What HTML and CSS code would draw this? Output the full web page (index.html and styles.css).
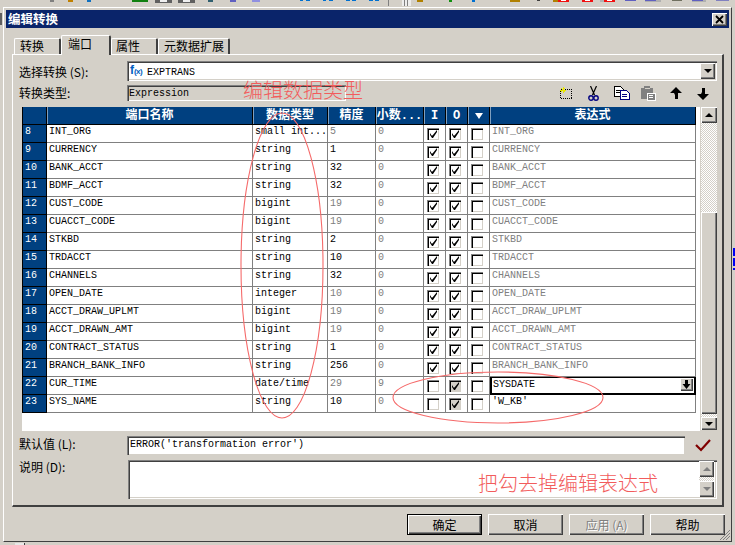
FILE: index.html
```html
<!DOCTYPE html>
<html lang="zh-CN">
<head>
<meta charset="utf-8">
<title>编辑转换</title>
<link rel="stylesheet" href="styles.css">
</head>
<body>
<svg width="0" height="0" class="defs" aria-hidden="true">
  <symbol id="ck" viewBox="0 0 12 12"><path d="M3 5 L3 7 L5 10 L6 10 L10 4 L10 2 L5.5 7.5 L4.5 7.5 L3 5Z" fill="#000"/></symbol>
</svg>
<div class="page">
  <svg class="appbar" width="735" height="7" viewBox="0 0 735 7" shape-rendering="crispEdges" aria-hidden="true">
    <rect x="50" y="0" width="4" height="2" fill="#808080"/>
    <rect x="68" y="0" width="5" height="2" fill="#c08000"/>
    <rect x="87" y="0" width="4" height="2" fill="#1070c0"/>
    <rect x="132" y="0" width="16" height="2" fill="#108010"/>
    <rect x="155" y="0" width="17" height="3" fill="#606060"/><rect x="160" y="0" width="7" height="2" fill="#f0f0f0"/>
    <rect x="178" y="0" width="17" height="3" fill="#606060"/><rect x="183" y="0" width="7" height="2" fill="#f0f0f0"/>
    <rect x="208" y="0" width="5" height="2" fill="#306070"/>
    <rect x="230" y="0" width="6" height="2" fill="#6060c0"/>
    <rect x="252" y="0" width="8" height="2" fill="#9090e0"/>
    <rect x="300" y="0" width="3" height="1" fill="#0070d0"/><rect x="306" y="0" width="4" height="1" fill="#0070d0"/>
    <rect x="323" y="0" width="3" height="1" fill="#0070d0"/><rect x="329" y="0" width="4" height="1" fill="#0070d0"/>
    <rect x="346" y="0" width="4" height="1" fill="#0070d0"/><rect x="352" y="0" width="4" height="1" fill="#0070d0"/>
    <rect x="369" y="0" width="4" height="1" fill="#0070d0"/><rect x="375" y="0" width="4" height="1" fill="#0070d0"/>
    <rect x="388" y="0" width="1" height="6" fill="#808080"/>
    <rect x="402" y="0" width="9" height="6" fill="#eeeeee"/><rect x="404" y="0" width="1" height="6" fill="#808080"/><rect x="407" y="0" width="1" height="6" fill="#808080"/>
    <rect x="417" y="0" width="6" height="2" fill="#b08000"/>
    <rect x="449" y="0" width="3" height="2" fill="#109010"/>
    <rect x="472" y="0" width="3" height="2" fill="#0070d0"/>
    <rect x="510" y="0" width="10" height="2" fill="#b08000"/>
    <rect x="537" y="0" width="3" height="1" fill="#404040"/>
    <rect x="553" y="0" width="5" height="2" fill="#b08000"/><rect x="558" y="0" width="11" height="2" fill="#f01010"/><rect x="561" y="0" width="5" height="1" fill="#fff"/>
    <rect x="582" y="0" width="11" height="2" fill="#f01010"/><rect x="585" y="0" width="5" height="1" fill="#fff"/>
    <rect x="600" y="0" width="15" height="2" fill="#b0b0b0"/><rect x="604" y="0" width="11" height="2" fill="#f01010"/><rect x="607" y="0" width="5" height="1" fill="#fff"/>
    <rect x="625" y="0" width="11" height="1" fill="#6060c0"/>
    <rect x="645" y="0" width="16" height="2" fill="#b0b0b0"/><rect x="645" y="0" width="11" height="1" fill="#6060c0"/>
    <rect x="672" y="0" width="10" height="1" fill="#707060"/>
    <rect x="692" y="0" width="14" height="2" fill="#b0b0b0"/><rect x="692" y="0" width="11" height="1" fill="#6060c0"/>
    <rect x="716" y="0" width="13" height="1" fill="#8080c0"/>
  </svg>

  <div class="dialog">
    <div class="title">
      <span class="title-text">编辑转换</span>
      <button class="close raised" type="button" aria-label="关闭">
        <svg width="9" height="9" viewBox="0 0 9 9" aria-hidden="true"><path d="M1 1 L8 8 M8 1 L1 8" stroke="#000" stroke-width="1.8" fill="none"/></svg>
      </button>
    </div>

    <div class="tabs">
      <div class="tab tab-a">转换</div>
      <div class="tab tab-active">端口</div>
      <div class="tab tab-b">属性</div>
      <div class="tab tab-c">元数据扩展</div>
    </div>

    <div class="panel">
      <div class="form-row row-select">
        <label class="label label-top">选择转换 (S):</label>
        <div class="select sunken">
          <span class="fx">f<small class="fx-x">(x)</small></span><span class="mono select-text">EXPTRANS</span>
          <span class="drop raised"><i class="arrow-down"></i></span>
        </div>
      </div>

      <div class="form-row row-type">
        <label class="label">转换类型:</label>
        <div class="type-field sunken mono">Expression</div>
        <div class="tools">
          <svg class="tool t-new" width="14" height="13" viewBox="0 0 14 13" shape-rendering="crispEdges" aria-hidden="true">
            <rect x="1.5" y="2.5" width="11" height="9" fill="none" stroke="#000" stroke-dasharray="1 1"/>
            <path d="M4 0 V6 M1 3 H7 M2 1 L6 5 M6 1 L2 5" stroke="#e8e800" fill="none"/>
          </svg>
          <svg class="tool t-cut" width="11" height="15" viewBox="0 0 11 15" aria-hidden="true">
            <path d="M2.5 0 L6.5 9 M8.5 0 L4.5 9" stroke="#000" stroke-width="1.2" fill="none"/>
            <circle cx="3" cy="12" r="2.2" fill="none" stroke="#000080" stroke-width="1.4"/>
            <circle cx="8" cy="12" r="2.2" fill="none" stroke="#000080" stroke-width="1.4"/>
          </svg>
          <svg class="tool t-copy" width="16" height="14" viewBox="0 0 16 14" shape-rendering="crispEdges" aria-hidden="true">
            <path d="M0.5 0.5 H6.5 L9.5 3.5 V10.5 H0.5Z" fill="#fff" stroke="#000"/>
            <path d="M2 4.5 H6 M2 6.5 H7" stroke="#000"/>
            <path d="M6.5 4.5 H12.5 L15.5 7.5 V13.5 H6.5Z" fill="#fff" stroke="#000080"/>
            <path d="M8 8.5 H13 M8 10.5 H13" stroke="#000080"/>
          </svg>
          <svg class="tool t-paste" width="16" height="15" viewBox="0 0 16 15" shape-rendering="crispEdges" aria-hidden="true">
            <path d="M1 2 H13 V13 H1Z" fill="#808080"/>
            <rect x="4" y="0" width="6" height="3" fill="#808080"/><rect x="5" y="2" width="5" height="1" fill="#d4d0c8"/>
            <rect x="7" y="7" width="8" height="7" fill="#808080" stroke="#fff"/>
            <path d="M9 9.5 H13 M9 11.5 H13" stroke="#fff"/>
          </svg>
          <svg class="tool t-up" width="12" height="13" viewBox="0 0 12 13" aria-hidden="true"><path d="M6 0 L12 6 H8 V12 H5 V8 L4 6 H0Z" fill="#000"/></svg>
          <svg class="tool t-down" width="12" height="13" viewBox="0 0 12 13" aria-hidden="true"><path d="M6 13 L12 7 H8 V1 H5 V5 L4 7 H0Z" fill="#000"/></svg>
        </div>
      </div>

      <div class="grid-wrap">
        <div class="grid">
          <table class="ports">
            <colgroup>
              <col class="c-num"><col class="c-name"><col class="c-type"><col class="c-prec"><col class="c-dec"><col class="c-chk"><col class="c-chk"><col class="c-chk"><col class="c-expr">
            </colgroup>
            <thead>
              <tr><th></th><th>端口名称</th><th>数据类型</th><th>精度</th><th>小数...</th><th>I</th><th>O</th><th><i class="v-mark"></i></th><th>表达式</th></tr>
            </thead>
            <tbody>
              <tr><td class="num">8</td><td>INT_ORG</td><td>small int...</td><td class="dim">5</td><td class="dim">0</td><td><span class="cb"><svg><use href="#ck"/></svg></span></td><td><span class="cb"><svg><use href="#ck"/></svg></span></td><td><span class="cb"></span></td><td class="dim">INT_ORG</td></tr>
              <tr><td class="num">9</td><td>CURRENCY</td><td>string</td><td>1</td><td class="dim">0</td><td><span class="cb"><svg><use href="#ck"/></svg></span></td><td><span class="cb"><svg><use href="#ck"/></svg></span></td><td><span class="cb"></span></td><td class="dim">CURRENCY</td></tr>
              <tr><td class="num">10</td><td>BANK_ACCT</td><td>string</td><td>32</td><td class="dim">0</td><td><span class="cb"><svg><use href="#ck"/></svg></span></td><td><span class="cb"><svg><use href="#ck"/></svg></span></td><td><span class="cb"></span></td><td class="dim">BANK_ACCT</td></tr>
              <tr><td class="num">11</td><td>BDMF_ACCT</td><td>string</td><td>32</td><td class="dim">0</td><td><span class="cb"><svg><use href="#ck"/></svg></span></td><td><span class="cb"><svg><use href="#ck"/></svg></span></td><td><span class="cb"></span></td><td class="dim">BDMF_ACCT</td></tr>
              <tr><td class="num">12</td><td>CUST_CODE</td><td>bigint</td><td class="dim">19</td><td class="dim">0</td><td><span class="cb"><svg><use href="#ck"/></svg></span></td><td><span class="cb"><svg><use href="#ck"/></svg></span></td><td><span class="cb"></span></td><td class="dim">CUST_CODE</td></tr>
              <tr><td class="num">13</td><td>CUACCT_CODE</td><td>bigint</td><td class="dim">19</td><td class="dim">0</td><td><span class="cb"><svg><use href="#ck"/></svg></span></td><td><span class="cb"><svg><use href="#ck"/></svg></span></td><td><span class="cb"></span></td><td class="dim">CUACCT_CODE</td></tr>
              <tr><td class="num">14</td><td>STKBD</td><td>string</td><td>2</td><td class="dim">0</td><td><span class="cb"><svg><use href="#ck"/></svg></span></td><td><span class="cb"><svg><use href="#ck"/></svg></span></td><td><span class="cb"></span></td><td class="dim">STKBD</td></tr>
              <tr><td class="num">15</td><td>TRDACCT</td><td>string</td><td>10</td><td class="dim">0</td><td><span class="cb"><svg><use href="#ck"/></svg></span></td><td><span class="cb"><svg><use href="#ck"/></svg></span></td><td><span class="cb"></span></td><td class="dim">TRDACCT</td></tr>
              <tr><td class="num">16</td><td>CHANNELS</td><td>string</td><td>32</td><td class="dim">0</td><td><span class="cb"><svg><use href="#ck"/></svg></span></td><td><span class="cb"><svg><use href="#ck"/></svg></span></td><td><span class="cb"></span></td><td class="dim">CHANNELS</td></tr>
              <tr><td class="num">17</td><td>OPEN_DATE</td><td>integer</td><td class="dim">10</td><td class="dim">0</td><td><span class="cb"><svg><use href="#ck"/></svg></span></td><td><span class="cb"><svg><use href="#ck"/></svg></span></td><td><span class="cb"></span></td><td class="dim">OPEN_DATE</td></tr>
              <tr><td class="num">18</td><td>ACCT_DRAW_UPLMT</td><td>bigint</td><td class="dim">19</td><td class="dim">0</td><td><span class="cb"><svg><use href="#ck"/></svg></span></td><td><span class="cb"><svg><use href="#ck"/></svg></span></td><td><span class="cb"></span></td><td class="dim">ACCT_DRAW_UPLMT</td></tr>
              <tr><td class="num">19</td><td>ACCT_DRAWN_AMT</td><td>bigint</td><td class="dim">19</td><td class="dim">0</td><td><span class="cb"><svg><use href="#ck"/></svg></span></td><td><span class="cb"><svg><use href="#ck"/></svg></span></td><td><span class="cb"></span></td><td class="dim">ACCT_DRAWN_AMT</td></tr>
              <tr><td class="num">20</td><td>CONTRACT_STATUS</td><td>string</td><td>1</td><td class="dim">0</td><td><span class="cb"><svg><use href="#ck"/></svg></span></td><td><span class="cb"><svg><use href="#ck"/></svg></span></td><td><span class="cb"></span></td><td class="dim">CONTRACT_STATUS</td></tr>
              <tr><td class="num">21</td><td>BRANCH_BANK_INFO</td><td>string</td><td>256</td><td class="dim">0</td><td><span class="cb"><svg><use href="#ck"/></svg></span></td><td><span class="cb"><svg><use href="#ck"/></svg></span></td><td><span class="cb"></span></td><td class="dim">BRANCH_BANK_INFO</td></tr>
              <tr><td class="num">22</td><td>CUR_TIME</td><td>date/time</td><td class="dim">29</td><td class="dim">9</td><td><span class="cb"></span></td><td><span class="cb cb-off"><svg><use href="#ck"/></svg></span></td><td><span class="cb"></span></td><td class="active-cell">SYSDATE<span class="cell-btn raised"><svg width="9" height="9" viewBox="0 0 9 9" aria-hidden="true"><path d="M3 0 H6 V4 H8.5 L4.5 9 L0.5 4 H3Z" fill="#000"/></svg></span></td></tr>
              <tr><td class="num">23</td><td>SYS_NAME</td><td>string</td><td>10</td><td class="dim">0</td><td><span class="cb"></span></td><td><span class="cb cb-off"><svg><use href="#ck"/></svg></span></td><td><span class="cb"></span></td><td>'W_KB'</td></tr>
            </tbody>
          </table>
        </div>
        <div class="vscroll">
          <span class="sbtn raised"><i class="arrow-up"></i></span>
          <span class="track"></span>
          <span class="thumb raised"></span>
          <span class="track track-end"></span>
          <span class="sbtn sbtn-low raised"><i class="arrow-down"></i></span>
        </div>
      </div>

      <div class="form-row row-default">
        <label class="label">默认值 (L):</label>
        <div class="default-field sunken mono">ERROR('transformation error')</div>
        <svg class="valid" width="16" height="13" viewBox="0 0 16 13" aria-hidden="true"><path d="M1 6 L6 11 L15 1" stroke="#800000" stroke-width="2.2" fill="none"/></svg>
      </div>

      <div class="form-row row-desc">
        <label class="label">说明 (D):</label>
        <div class="desc-field sunken">
          <div class="desc-scroll">
            <span class="sbtn sbtn-desc raised"><i class="arrow-up arrow-dim"></i></span>
            <span class="track track-mini"></span>
            <span class="sbtn sbtn-desc raised"><i class="arrow-down arrow-dim"></i></span>
          </div>
        </div>
      </div>
    </div>

    <div class="foot">
      <button class="btn raised btn-default" type="button">确定</button>
      <button class="btn raised" type="button">取消</button>
      <button class="btn raised btn-off" type="button">应用 (A)</button>
      <button class="btn raised" type="button">帮助</button>
    </div>
    <svg class="grip" width="12" height="12" viewBox="0 0 12 12" aria-hidden="true"><path d="M11 1 L1 11 M11 4 L4 11 M11 7 L7 11" stroke="#808080" fill="none"/></svg>
  </div>

  <span class="edge-left"></span>
  <span class="edge-right"></span>
  <span class="stump"></span>

  <svg class="marks" width="735" height="545" viewBox="0 0 735 545" aria-hidden="true">
    <ellipse cx="282" cy="265.5" rx="41" ry="152.5" fill="none" stroke="#f56a6a" stroke-width="1.1"/>
    <ellipse cx="498" cy="397.5" rx="105" ry="25.5" fill="none" stroke="#f56a6a" stroke-width="1.1"/>
  </svg>
  <div class="note note-a">编辑数据类型</div>
  <div class="note note-b">把勾去掉编辑表达式</div>
</div>
</body>
</html>
```

FILE: styles.css
```css
* { box-sizing: border-box; }
html, body { margin: 0; padding: 0; }
body { background: #d4d0c8; font-family: "Noto Sans CJK SC", "Liberation Sans", sans-serif; font-size: 12px; color: #000; overflow: hidden; }
.defs { position: absolute; }
.page { position: relative; width: 735px; height: 545px; overflow: hidden; }
.appbar { display: block; }
.mono { font-family: "Liberation Mono", "Noto Sans CJK SC", monospace; font-size: 10px; }

.raised { background: #d4d0c8; border: 0; box-shadow: inset 1px 1px #fff, inset -1px -1px #404040, inset -2px -2px #808080; }
.sunken { box-shadow: inset 1px 1px #808080, inset 2px 2px #404040, inset -1px -1px #fff, inset -2px -2px #d4d0c8; }

.dialog { position: relative; width: 729px; height: 535px; margin-left: 3px; padding: 2px; border: 1px solid #404040; border-left-color: #fff; border-top-color: #fff; }
.title { display: flex; justify-content: space-between; align-items: center; height: 18px; padding: 0 2px 0 2px; background: #0a246a; }
.title-text { color: #fff; font-weight: 700; font-size: 12.5px; line-height: 18px; }
.close { display: flex; align-items: center; justify-content: center; width: 15px; height: 13px; padding: 0; }

.tabs { display: flex; align-items: flex-end; height: 19px; margin-top: 7px; padding-left: 8px; }
.tab { height: 16px; padding-left: 5px; line-height: 14px; border: 1px solid #d4d0c8; border-top-color: #fff; border-left-color: #fff; border-right: 2px solid #404040; border-bottom: 0; border-radius: 2px 2px 0 0; }
.tab-a { width: 47px; }
.tab-active { position: relative; width: 50px; height: 20px; margin-bottom: -1px; padding-left: 6px; line-height: 16px; background: #d4d0c8; z-index: 1; }
.tab-b { width: 47px; padding-left: 4px; }
.tab-c { width: 72px; }

.panel { width: 712px; height: 453px; margin-left: 6px; padding: 6px 5px 0 6px; border: 1px solid #404040; border-left-color: #fff; border-top-color: #fff; border-right-width: 2px; border-bottom-width: 2px; }
.form-row { display: flex; }
.row-select { height: 20px; }
.label { flex: 0 0 108px; white-space: pre; line-height: 20px; }
.label-top { line-height: 21px; }
.select { position: relative; display: flex; align-items: center; flex: 1; height: 20px; padding-left: 3px; background: #fff; }
.select-text { padding-top: 2px; }
.fx { flex: none; width: 13px; margin-right: 4px; color: #0060c0; font: 700 12px/12px "Liberation Sans", sans-serif; white-space: nowrap; }
.fx-x { font-size: 8px; font-weight: 700; letter-spacing: -0.6px; }
.drop { position: absolute; right: 2px; top: 2px; display: flex; align-items: center; justify-content: center; width: 15px; height: 16px; }

.row-type { height: 16px; margin-top: 4px; align-items: center; }
.row-type .label { line-height: 16px; }
.type-field { width: 219px; height: 16px; padding: 3px 0 0 2px; line-height: 12px; background: #d4d0c8; }
.tools { position: relative; display: flex; flex: 1; align-items: center; height: 16px; margin-left: 213px; }
.tool { display: block; flex: none; }
.t-cut { margin-left: 15px; }
.t-copy { margin-left: 15px; }
.t-paste { margin-left: 10px; }
.t-up { margin-left: 14px; }
.t-down { margin-left: 15px; }

.grid-wrap { display: flex; height: 324px; margin: 6px 0 0 3px; }
.grid { width: 680px; height: 324px; background: #fff; }
.ports { width: 674px; table-layout: fixed; border-collapse: separate; border-spacing: 0; font-family: "Liberation Mono", monospace; font-size: 10px; }
.c-num { width: 25px; }
.c-name { width: 206px; }
.c-type { width: 75px; }
.c-prec { width: 48px; }
.c-dec { width: 48px; }
.c-chk { width: 22px; }
.c-expr { width: 206px; }
.ports th { height: 18px; padding: 0; background: #004080; color: #fff; font: 700 12px/16px "Liberation Mono", "Noto Sans CJK SC", sans-serif; text-align: center; border-right: 1px solid #000; border-bottom: 1px solid #000; box-shadow: inset 1px 0 #7f9fbf; vertical-align: middle; white-space: nowrap; }
.ports th:first-child { border-left: 1px solid #000; box-shadow: none; }
.ports td { position: relative; height: 18px; padding: 1px 0 0 2px; border-right: 1px solid #808080; border-bottom: 1px solid #808080; line-height: 11px; vertical-align: top; white-space: nowrap; overflow: hidden; }
.ports td.num { padding-left: 2px; background: #004080; color: #fff; border-left: 1px solid #000; border-right: 1px solid #000; border-bottom-color: #000; }
.ports td.dim { color: #808080; }
.ports td:nth-child(n+6):nth-child(-n+8) { padding: 0; }
.ports td.active-cell { border: 2px solid #000; border-top-width: 1px; padding: 1px 0 0 1px; line-height: 11px; }
.v-mark { display: block; width: 0; height: 0; margin: 0 auto; border: 4px solid transparent; border-top: 6px solid #fff; border-bottom: 0; }
.cb { display: block; width: 12px; height: 12px; margin: 3px 0 0 3px; background: #fff; box-shadow: inset 1px 1px #808080, inset 2px 2px #000, inset -1px -1px #d4d0c8; }
.cb svg { display: block; width: 12px; height: 12px; }
.cb-off { background: #d4d0c8; }
.cell-btn { position: absolute; right: 1px; top: 0; display: flex; align-items: center; justify-content: center; width: 13px; height: 13px; }

.vscroll { display: flex; flex-direction: column; width: 16px; height: 323px; margin-left: 1px; }
.sbtn { display: flex; flex: none; align-items: center; justify-content: center; width: 16px; height: 16px; }
.sbtn-low { height: 13px; }
.track { flex: none; height: 89px; background: repeating-conic-gradient(#fff 0 25%, #d4d0c8 0 50%) 0 0 / 2px 2px; }
.track-end { height: 3px; }
.thumb { flex: none; height: 202px; }
.arrow-up, .arrow-down { display: block; width: 0; height: 0; border: 4px solid transparent; }
.arrow-up { border-bottom-color: #000; border-top: 0; }
.arrow-down { border-top-color: #000; border-bottom: 0; }
.arrow-up.arrow-dim { border-bottom-color: #808080; }
.arrow-down.arrow-dim { border-top-color: #808080; }

.row-default { height: 19px; margin-top: 5px; }
.row-default .label { line-height: 16px; }
.default-field { width: 558px; height: 19px; padding: 3px 0 0 3px; line-height: 12px; background: #fff; box-shadow: inset 1px 1px #808080, inset 2px 2px #404040, inset -1px -1px #d4d0c8; }
.valid { margin: 3px 0 0 10px; }
.row-desc { height: 39px; margin-top: 5px; }
.row-desc .label { line-height: 14px; }
.desc-field { position: relative; width: 589px; height: 39px; margin-left: 1px; background: #fff; }
.desc-scroll { position: absolute; right: 3px; top: 1px; display: flex; flex-direction: column; width: 15px; }
.sbtn-desc { width: 15px; height: 16px; }
.track-mini { height: 4px; }

.foot { display: flex; justify-content: flex-end; gap: 6px; margin-top: 7px; padding-right: 4px; }
.btn { width: 75px; height: 21px; padding: 0; font: inherit; line-height: 20px; color: #000; }
.btn-default { outline: 1px solid #000; outline-offset: -1px; box-shadow: inset 2px 2px #fff, inset -2px -2px #404040, inset -3px -3px #808080; }
.btn-off { color: #808080; text-shadow: 1px 1px #fff; }
.grip { position: absolute; right: 0; bottom: 0; }

.edge-left { position: absolute; left: 0; top: 13px; width: 2px; height: 12px; background: #606060; }
.edge-right { position: absolute; right: 0; top: 248px; width: 2px; height: 22px; background: repeating-linear-gradient(#0000f0 0 8px, #d4d0c8 8px 10px); }
.stump { position: absolute; left: 15px; bottom: 0; width: 10px; height: 2px; background: #e8e8e8; border-right: 1px solid #404040; }

.marks { position: absolute; left: 0; top: 0; pointer-events: none; }
.note { position: absolute; color: #f25c5c; font-size: 20px; line-height: 20px; font-weight: 300; white-space: nowrap; }
.note-a { left: 243px; top: 80px; }
.note-b { left: 478px; top: 473px; }
```
